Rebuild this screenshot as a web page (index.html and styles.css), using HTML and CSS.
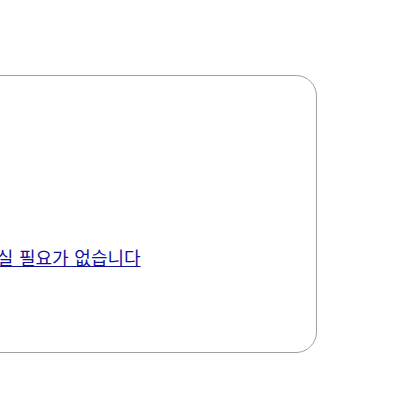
FILE: index.html
```html
<!DOCTYPE html>
<html lang="ko">
<head>
<meta charset="utf-8">
<link rel="stylesheet" href="styles.css">
</head>
<body>
<div class="card">
  <a class="link" href="#">걱정하실 필요가 없습니다</a>
</div>
</body>
</html>
```
FILE: styles.css
```css
html, body {
  margin: 0;
  padding: 0;
  background: #fff;
}
body {
  font-family: "DejaVu Sans", "Noto Sans CJK KR", sans-serif;
  font-size: 18px;
  overflow: hidden;
}
.card {
  box-sizing: border-box;
  margin: 75px 0 0 -300px;
  width: 617px;
  height: 278px;
  border: 1px solid #a0a0a0;
  border-radius: 21px;
  padding: 168px 0 0 246px;
}
.link {
  color: #10109c;
  text-decoration: underline;
}
```
